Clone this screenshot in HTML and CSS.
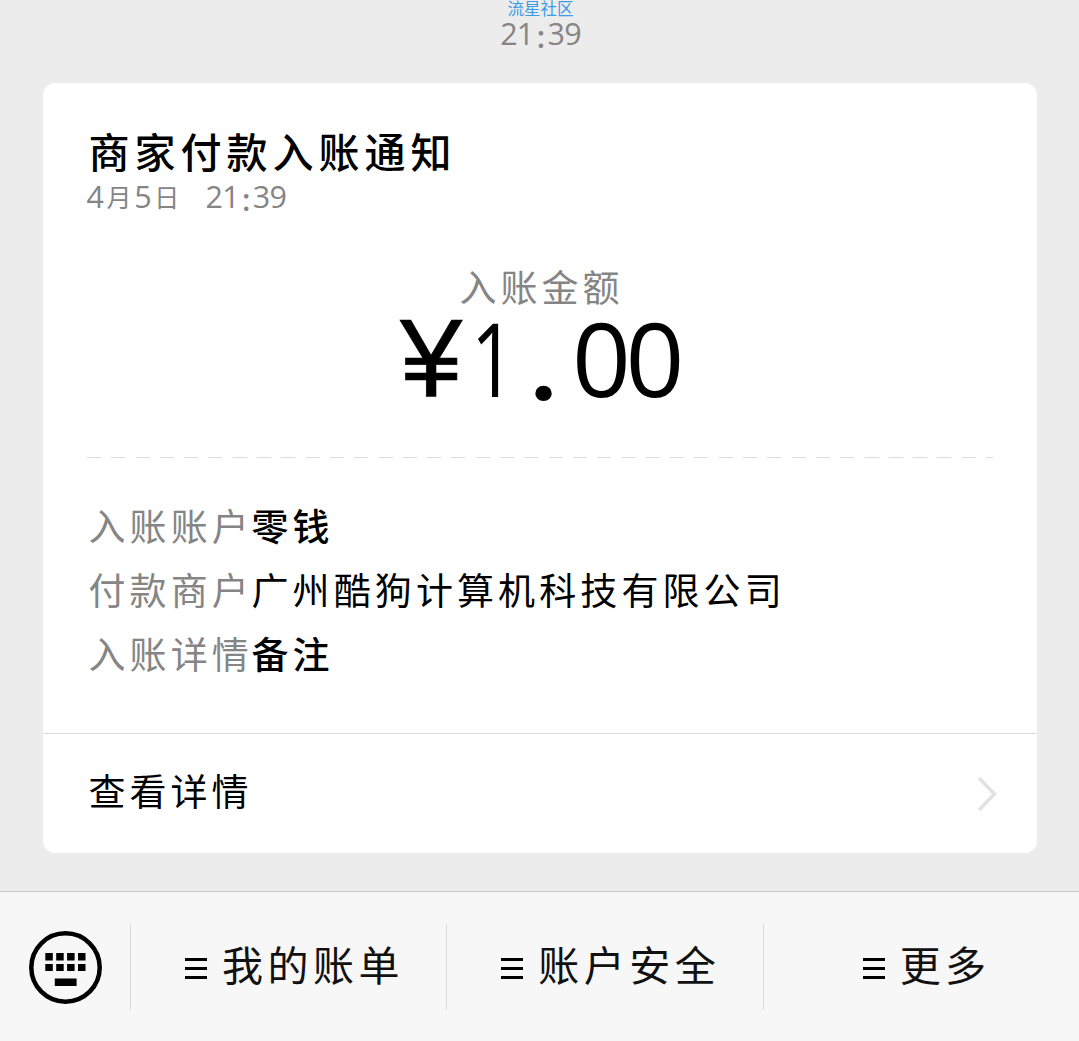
FILE: index.html
```html
<!DOCTYPE html>
<html lang="zh-CN">
<head>
<meta charset="utf-8">
<title>商家付款入账通知</title>
<link rel="stylesheet" href="styles.css">
</head>
<body>
<main class="chat">
  <div class="community">流星社区</div>
  <time class="chat-time">21<span class="colon">:</span>39</time>
  <article class="card">
    <header class="card-head">
      <h1 class="title">商家付款入账通知</h1>
      <div class="date"><span class="day">4<span class="han">月</span>5<span class="han">日</span></span><span class="clock">21<span class="colon">:</span>39</span></div>
    </header>
    <section class="amount">
      <div class="amount-label">入账金额</div>
      <div class="amount-value"><span class="yen">¥</span><span class="one">1</span><span class="dot">.</span><span class="zeros">00</span></div>
    </section>
    <div class="dashes"></div>
    <dl class="details">
      <div class="row"><dt>入账账户</dt><dd class="strong">零钱</dd></div>
      <div class="row"><dt>付款商户</dt><dd>广州酷狗计算机科技有限公司</dd></div>
      <div class="row"><dt>入账详情</dt><dd class="strong">备注</dd></div>
    </dl>
    <a class="more">
      <span>查看详情</span>
      <svg class="chevron" width="22" height="38" viewBox="0 0 22 38"><path d="M2 3 17.500 19 2 35" fill="none" stroke="#e2e2e2" stroke-width="3.600"/></svg>
    </a>
  </article>
</main>
<nav class="bar">
  <div class="keyboard">
    <svg width="74" height="74" viewBox="0 0 74 74">
      <circle cx="37.500" cy="37.500" r="34.200" fill="none" stroke="#000" stroke-width="4.500"/>
      <path d="M17.300 23h7.500v7.500h-7.500zM28.200 23h7.500v7.500h-7.500zM39.100 23h7.500v7.500h-7.500zM50 23h7.500v7.500h-7.500zM17.300 34h7.500v7h-7.500zM28.200 34h7.500v7h-7.500zM39.100 34h7.500v7h-7.500zM50 34h7.500v7h-7.500zM26.800 48.500h21.800v7.500H26.800z"/>
    </svg>
  </div>
  <div class="item"><i class="lines"></i><span>我的账单</span></div>
  <div class="item"><i class="lines"></i><span>账户安全</span></div>
  <div class="item item-last"><i class="lines"></i><span>更多</span></div>
</nav>
</body>
</html>
```
FILE: styles.css
```css
* { box-sizing: border-box; margin: 0; padding: 0; }
body {
  width: 1079px;
  height: 1041px;
  overflow: hidden;
  display: flex;
  flex-direction: column;
  background: #ececec;
  color: #000;
  font-family: "Open Sans", "Noto Sans CJK SC", sans-serif;
}
.chat { height: 891px; display: flex; flex-direction: column; align-items: center; }
.community {
  height: 17px;
  padding-left: 2px;
  color: #3c9bea;
  font: 16.5px/17px "Noto Sans CJK SC", sans-serif;
}
.chat-time, .date { color: #858585; font-size: 30.5px; font-weight: 400; letter-spacing: -0.8px; }
.chat-time { height: 66px; line-height: 33px; padding-left: 2px; }
.colon { display: inline-block; width: 14px; text-align: center; position: relative; top: 3px; font-weight: 600; }
.card {
  width: 994px;
  height: 770px;
  background: #fff;
  border-radius: 12px;
  display: flex;
  flex-direction: column;
}
.card-head { height: 174px; padding: 42px 44px 0; }
.title {
  font: 500 41px/50px "Noto Sans CJK SC", sans-serif;
  letter-spacing: 5px;
  padding-left: 2px;
}
.date { display: flex; line-height: 42px; }
.day { width: 119px; white-space: nowrap; }
.han { display: inline-block; width: 31px; text-align: center; font: 400 25px/40px "Noto Sans CJK SC", sans-serif; position: relative; top: -1px; }
.amount { height: 200px; display: flex; flex-direction: column; align-items: center; }
.amount-label {
  height: 56px;
  color: #858585;
  font: 37px/58px "Noto Sans CJK SC", sans-serif;
  letter-spacing: 4px;
  padding-left: 4px;
}
.amount-value { display: flex; height: 100px; line-height: 89px; font-size: 103px; }
.yen { width: 68px; font: 400 112px/91px "Liberation Sans", sans-serif; -webkit-text-stroke: 0.6px #000; }
.one { width: 61px; transform: scaleX(0.75); transform-origin: 12px 50%; }
.dot { width: 43px; font-family: Roboto, sans-serif; font-weight: 700; line-height: 103px; }
.zeros { letter-spacing: -5.5px; }
.dashes {
  flex: none;
  width: 906px;
  height: 1px;
  margin: 0 44px;
  background: repeating-linear-gradient(90deg, #dcdcdc 0 14px, transparent 14px 24.300px);
}
.details { height: 275px; padding: 35px 46px 0; font: 37px/64px "Noto Sans CJK SC", sans-serif; letter-spacing: 4.100px; }
.row { display: flex; height: 64px; }
dt { width: 163px; color: #858585; white-space: nowrap; }
.strong { font-weight: 500; }
.more {
  flex: 1;
  border-top: 1px solid #dedede;
  display: flex;
  align-items: center;
  justify-content: space-between;
  padding: 0 38px 0 46px;
  font: 37px/60px "Noto Sans CJK SC", sans-serif;
  letter-spacing: 4px;
}
.more span, .item span { padding-bottom: 7px; }
.bar {
  height: 150px;
  border-top: 1px solid #c8c8c8;
  background: #f7f7f7;
  display: flex;
  align-items: center;
}
.keyboard { width: 130px; padding-left: 28px; }
.keyboard svg, .chevron { display: block; overflow: visible; }
.item {
  width: 316.500px;
  height: 86px;
  border-left: 1px solid #dadada;
  padding-left: 54px;
  display: flex;
  align-items: center;
  gap: 15px;
  color: #111;
  font: 41px/60px "Noto Sans CJK SC", sans-serif;
  letter-spacing: 4.500px;
}
.item-last { padding-left: 99px; }
.lines {
  width: 22px;
  height: 21px;
  margin-top: 4px;
  background: linear-gradient(#000 0 3px, transparent 3px 9px, #000 9px 12px, transparent 12px 18px, #000 18px);
}
```
